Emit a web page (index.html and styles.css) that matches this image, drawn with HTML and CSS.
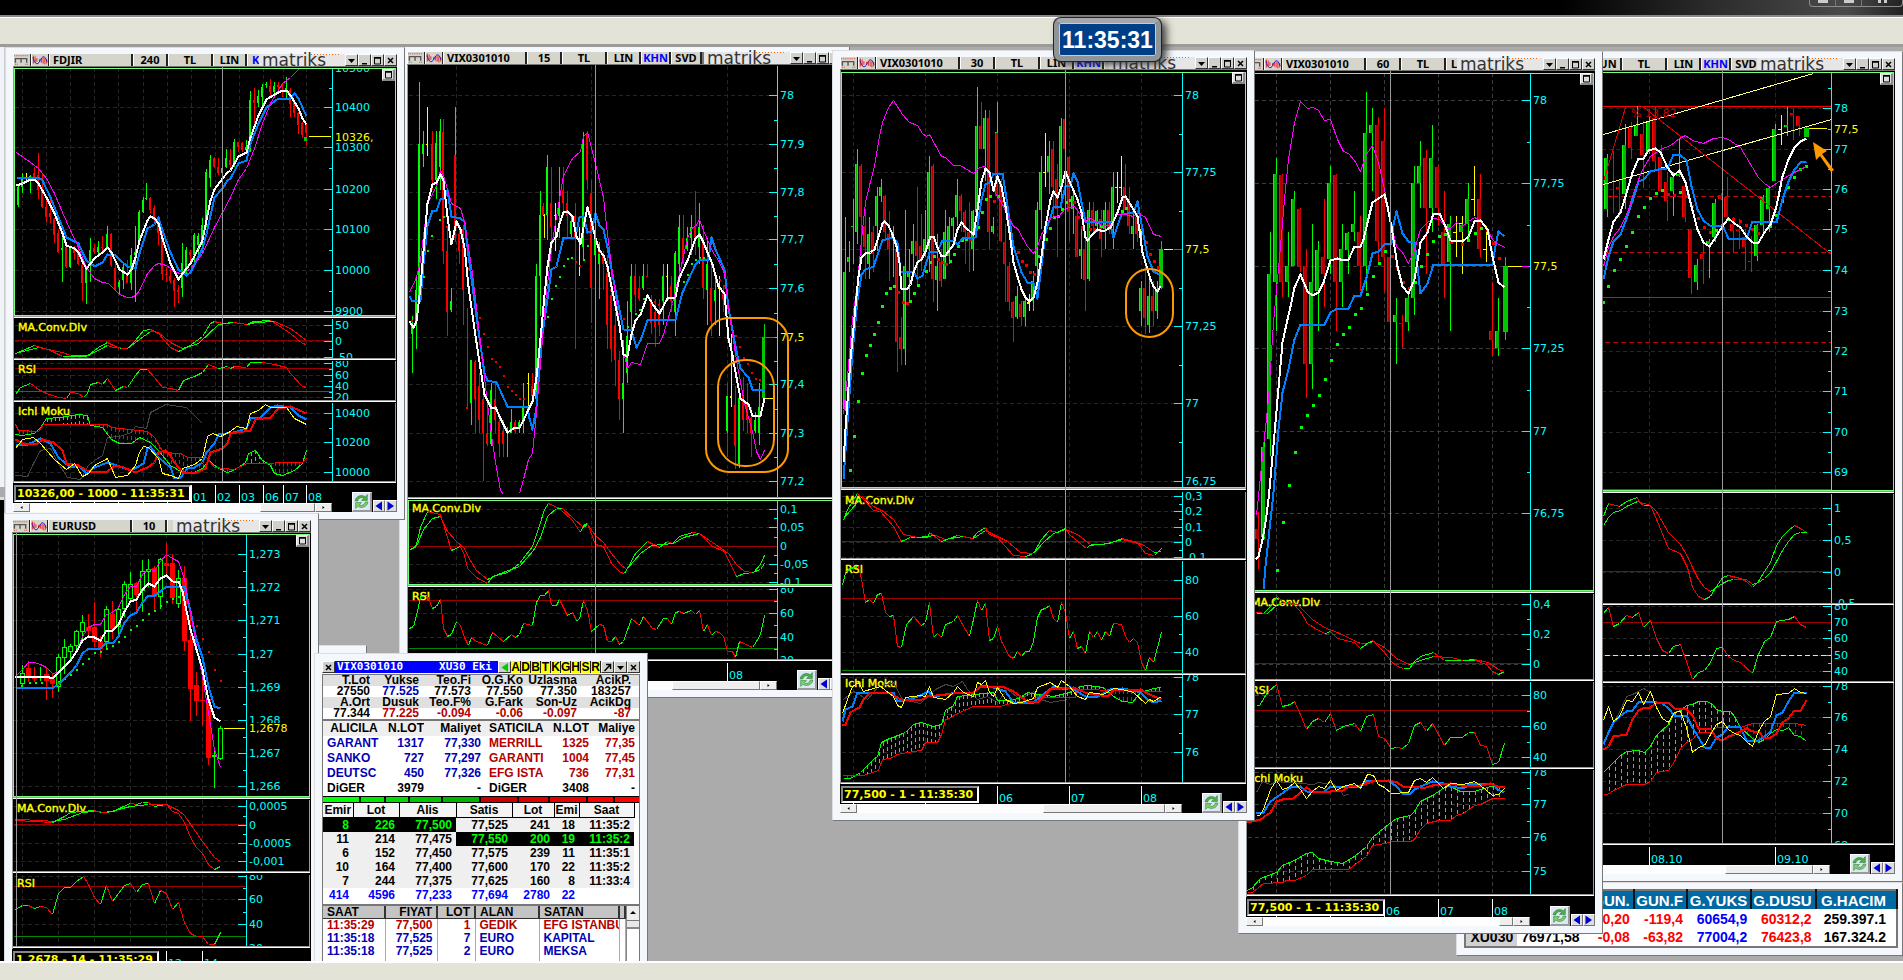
FILE: index.html
```html
<!DOCTYPE html>
<html lang="tr">
<head>
<meta charset="utf-8">
<title>Matriks</title>
<link rel="stylesheet" href="styles.css">
</head>
<body>
<svg class="defs" aria-hidden="true">
  <symbol id="i-m" viewBox="0 0 17 12"><path d="M0 1.5h16M1 10.500h3M12 10.500h4" stroke="#d33" stroke-dasharray="1 1" fill="none"/><path d="M1.500 9V4.500h12V9M7.500 9V4.500" stroke="#555" stroke-width="1.500" fill="none"/></symbol>
  <symbol id="i-wave" viewBox="0 0 18 12"><path d="M1.500 1v9M3.500 2v7M5.500 4v4M8.500 5v3M10.500 4v5M12.500 3v7M14.500 4v7M16.500 5v5" stroke="#f01010"/><path d="M1 3c2 7 5 10 8 4s5-7 8 1" stroke="#1010d0" fill="none"/></symbol>
  <symbol id="i-down" viewBox="0 0 9 9"><path d="M1 3h7L4.500 7z"/></symbol>
  <symbol id="i-min" viewBox="0 0 9 9"><path d="M2 7h5v1.500H2z"/></symbol>
  <symbol id="i-max" viewBox="0 0 9 9"><path d="M1.500 2h6v6h-6z" fill="none" stroke="#000"/><path d="M1 1h7v1.500H1z"/></symbol>
  <symbol id="i-close" viewBox="0 0 9 9"><path d="M2 2l5 5M7 2L2 7" stroke="#000" stroke-width="1.500"/></symbol>
  <symbol id="i-out" viewBox="0 0 9 9"><path d="M1.500 8L7 2M3 1.500h4.500V6" fill="none" stroke="#000" stroke-width="1.500"/></symbol>
  <symbol id="i-left" viewBox="0 0 9 9"><path d="M8 0v9L1.500 4.500z"/></symbol>
  <symbol id="i-right" viewBox="0 0 9 9"><path d="M1.500 0v9L8 4.500z"/></symbol>
  <symbol id="i-sl" viewBox="0 0 9 7"><path d="M5.500 2v3L3.500 3.500z"/></symbol>
  <symbol id="i-sr" viewBox="0 0 9 7"><path d="M3.500 2v3l2-1.500z"/></symbol>
  <symbol id="i-refresh" viewBox="0 0 16 16"><path d="M2 7.500C2.500 3 8 1 11.500 3.500L13.500 1.500V7H8l2-2C7.500 3.500 5 5 4.500 7.500z" fill="#4fb04a" stroke="#1c7a2c" stroke-width=".5"/><path d="M14 8.500c-.5 4.500-6 6.500-9.500 4L2.500 14.500V9H8l-2 2c2.500 1.500 5 0 5.500-2.500z" fill="#7fd06c" stroke="#1c7a2c" stroke-width=".5"/></symbol>
</svg>

<header class="caption"><div class="caption-buttons"><button aria-label="Minimize"><i class="bar"></i></button><button aria-label="Restore"><i class="bar"></i></button><button class="wide" aria-label="Close"><i class="cross"></i></button></div></header>
<div class="toolbar"></div>

<main class="desktop">
  <div class="strip"></div>
  <div class="strip-chart"></div>
  <section class="window back"></section>

  <section class="window w-vix15">
    <div class="title"><div class="cells"><button class="c-ico"><svg><use href="#i-m"/></svg></button><button class="c-ico"><svg><use href="#i-wave"/></svg></button><button class="c-name">VIX0301010</button><button class="c-per">15</button><button class="c-tl">TL</button><button class="c-lin">LIN</button><button class="c-khn">KHN</button><button class="c-svd">SVD</button></div><div class="logo">matriks</div><div class="ctl"><button><svg><use href="#i-down"/></svg></button><button><svg><use href="#i-min"/></svg></button><button><svg><use href="#i-max"/></svg></button><button><svg><use href="#i-close"/></svg></button></div></div>
    <svg class="chart" data-chart="vix15"></svg>
    <div class="foot"><div class="time"><svg class="axis" data-time="vix15"></svg><div class="scroll"><button><svg><use href="#i-sl"/></svg></button><div class="track"><div class="thumb t88"></div></div><button><svg><use href="#i-sr"/></svg></button></div></div><div class="tools"><button class="refresh" aria-label="Refresh"><svg><use href="#i-refresh"/></svg></button><button class="step"><svg><use href="#i-left"/></svg></button><button class="step"><svg><use href="#i-right"/></svg></button></div></div>
  </section>

  <section class="window w-day">
    <div class="title"><div class="cells"><button class="c-ico"><svg><use href="#i-m"/></svg></button><button class="c-ico"><svg><use href="#i-wave"/></svg></button><button class="c-name">VIX0301010</button><button class="c-per">GUN</button><button class="c-tl">TL</button><button class="c-lin">LIN</button><button class="c-khn">KHN</button><button class="c-svd">SVD</button></div><div class="logo">matriks</div><div class="ctl"><button><svg><use href="#i-down"/></svg></button><button><svg><use href="#i-min"/></svg></button><button><svg><use href="#i-max"/></svg></button><button><svg><use href="#i-close"/></svg></button></div></div>
    <svg class="chart" data-chart="day"></svg>
    <button class="pane-max" aria-label="Maximize pane"><svg><use href="#i-max"/></svg></button>
    <div class="foot"><div class="time"><svg class="axis" data-time="day"></svg><div class="scroll"><button><svg><use href="#i-sl"/></svg></button><div class="track"><div class="thumb t88"></div></div><button><svg><use href="#i-sr"/></svg></button></div></div><div class="tools"><button class="refresh" aria-label="Refresh"><svg><use href="#i-refresh"/></svg></button><button class="step"><svg><use href="#i-left"/></svg></button><button class="step"><svg><use href="#i-right"/></svg></button></div></div>
  </section>

  <section class="window w-quotes">
    <table class="quotes">
      <colgroup><col class="q1"><col class="q2"><col class="q3"><col class="q4"><col class="q5"><col class="q5"><col class="q6"></colgroup>
      <thead><tr><th></th><th></th><th>GUN.</th><th>GUN.F</th><th>G.YUKS</th><th>G.DUSU</th><th>G.HACIM</th></tr></thead>
      <tbody><tr><td class="sym"></td><td></td><td class="dn">-0,20</td><td class="dn">-119,4</td><td class="hi">60654,9</td><td class="dn">60312,2</td><td>259.397.1</td></tr>
      <tr><td class="sym">XU030</td><td>76971,58</td><td class="dn">-0,08</td><td class="dn">-63,82</td><td class="hi">77004,2</td><td class="dn">76423,8</td><td>167.324.2</td></tr></tbody>
    </table>
  </section>

  <section class="window w-fdjir">
    <div class="title"><div class="cells"><button class="c-ico"><svg><use href="#i-m"/></svg></button><button class="c-ico"><svg><use href="#i-wave"/></svg></button><button class="c-name">FDJIR</button><button class="c-per">240</button><button class="c-tl">TL</button><button class="c-lin">LIN</button><button class="c-khn">K</button></div><div class="logo">matriks</div><div class="ctl"><button><svg><use href="#i-down"/></svg></button><button><svg><use href="#i-min"/></svg></button><button><svg><use href="#i-max"/></svg></button><button><svg><use href="#i-close"/></svg></button></div></div>
    <svg class="chart" data-chart="fdjir"></svg>
    <button class="pane-max" aria-label="Maximize pane"><svg><use href="#i-max"/></svg></button>
    <div class="foot"><div class="time"><svg class="axis" data-time="fdjir"></svg><output class="last">10326,00 - 1000 - 11:35:31</output><div class="scroll"><button><svg><use href="#i-sl"/></svg></button><div class="track"><div class="thumb t55"></div></div><button><svg><use href="#i-sr"/></svg></button></div></div><div class="tools"><button class="refresh" aria-label="Refresh"><svg><use href="#i-refresh"/></svg></button><button class="step"><svg><use href="#i-left"/></svg></button><button class="step"><svg><use href="#i-right"/></svg></button></div></div>
  </section>

  <section class="window w-vix60">
    <div class="title"><div class="cells"><button class="c-ico"><svg><use href="#i-m"/></svg></button><button class="c-ico"><svg><use href="#i-wave"/></svg></button><button class="c-name">VIX0301010</button><button class="c-per">60</button><button class="c-tl">TL</button><button class="c-lin">L</button></div><div class="logo">matriks</div><div class="ctl"><button><svg><use href="#i-down"/></svg></button><button><svg><use href="#i-min"/></svg></button><button><svg><use href="#i-max"/></svg></button><button><svg><use href="#i-close"/></svg></button></div></div>
    <svg class="chart" data-chart="vix60"></svg>
    <button class="pane-max" aria-label="Maximize pane"><svg><use href="#i-max"/></svg></button>
    <div class="foot"><div class="time"><svg class="axis" data-time="vix60"></svg><output class="last">77,500 - 1 - 11:35:30</output><div class="scroll"><button><svg><use href="#i-sl"/></svg></button><div class="track"><div class="thumb t14"></div></div><button><svg><use href="#i-sr"/></svg></button></div></div><div class="tools"><button class="refresh" aria-label="Refresh"><svg><use href="#i-refresh"/></svg></button><button class="step"><svg><use href="#i-left"/></svg></button><button class="step"><svg><use href="#i-right"/></svg></button></div></div>
  </section>

  <section class="window w-vix30">
    <div class="title"><div class="cells"><button class="c-ico"><svg><use href="#i-m"/></svg></button><button class="c-ico"><svg><use href="#i-wave"/></svg></button><button class="c-name">VIX0301010</button><button class="c-per">30</button><button class="c-tl">TL</button><button class="c-lin">LIN</button><button class="c-khn">KHN</button><button class="c-svd"></button></div><div class="logo">matriks</div><div class="ctl"><button><svg><use href="#i-down"/></svg></button><button><svg><use href="#i-min"/></svg></button><button><svg><use href="#i-max"/></svg></button><button><svg><use href="#i-close"/></svg></button></div></div>
    <svg class="chart" data-chart="vix30"></svg>
    <button class="pane-max" aria-label="Maximize pane"><svg><use href="#i-max"/></svg></button>
    <div class="foot"><div class="time"><svg class="axis" data-time="vix30"></svg><output class="last">77,500 - 1 - 11:35:30</output><div class="scroll"><button><svg><use href="#i-sl"/></svg></button><div class="track"><div class="thumb t122"></div></div><button><svg><use href="#i-sr"/></svg></button></div></div><div class="tools"><button class="refresh" aria-label="Refresh"><svg><use href="#i-refresh"/></svg></button><button class="step"><svg><use href="#i-left"/></svg></button><button class="step"><svg><use href="#i-right"/></svg></button></div></div>
  </section>

  <section class="window w-eurusd">
    <div class="title"><div class="cells"><button class="c-ico"><svg><use href="#i-m"/></svg></button><button class="c-ico"><svg><use href="#i-wave"/></svg></button><button class="c-name">EURUSD</button><button class="c-per">10</button><button class="c-tl"></button></div><div class="logo">matriks</div><div class="ctl"><button><svg><use href="#i-down"/></svg></button><button><svg><use href="#i-min"/></svg></button><button><svg><use href="#i-max"/></svg></button><button><svg><use href="#i-close"/></svg></button></div></div>
    <svg class="chart" data-chart="eurusd"></svg>
    <button class="pane-max" aria-label="Maximize pane"><svg><use href="#i-max"/></svg></button>
    <div class="foot"><div class="time"><svg class="axis" data-time="eurusd"></svg><output class="last">1,2678 - 14 - 11:35:29</output></div><div class="tools"></div></div>
  </section>

  <section class="window w-order">
    <div class="otitle"><button class="sq"><svg><use href="#i-close"/></svg></button><h2><span>VIX0301010</span><span>XU30 Eki</span></h2><button class="sq back-btn"><svg><use href="#i-left"/></svg></button><div class="letters"><button>A</button><button>D</button><button>B</button><button>T</button><button>K</button><button>G</button><button>H</button><button>S</button><button>R</button></div><button class="sq"><svg><use href="#i-out"/></svg></button><button class="sq"><svg><use href="#i-down"/></svg></button><button class="sq"><svg><use href="#i-close"/></svg></button></div>
    <div class="opanel">
      <table class="t-sum">
        <colgroup><col class="s1"><col class="s2"><col class="s3"><col class="s3"><col class="s4"><col class="s4"><col></colgroup>
        <tbody><tr class="h"><th>T.Lot</th><th>Yukse</th><th>Teo.Fi</th><th>O.G.Ko</th><th>Uzlasma</th><th>AcikP.</th><th></th></tr>
        <tr><td>27550</td><td class="nv">77.525</td><td>77.573</td><td>77.550</td><td>77.350</td><td>183257</td><td></td></tr>
        <tr class="h"><th>A.Ort</th><th>Dusuk</th><th>Teo.F%</th><th>G.Fark</th><th>Son-Uz</th><th>AcikDg</th><th></th></tr>
        <tr class="rd"><td class="bk">77.344</td><td>77.225</td><td>-0.094</td><td>-0.06</td><td>-0.097</td><td>-87</td><td></td></tr></tbody>
      </table>
      <table class="t-brk">
        <colgroup><col class="b1"><col class="b2"><col class="b3"><col class="b4"><col class="b5"><col class="b6"><col></colgroup>
        <thead><tr><th class="l">&nbsp;ALICILA</th><th>N.LOT</th><th>Maliyet</th><th class="l sell">SATICILA</th><th>N.LOT</th><th>Maliye</th><th></th></tr></thead>
        <tbody><tr><td class="l nv">GARANT</td><td class="nv">1317</td><td class="nv">77,330</td><td class="l sell rdc">MERRILL</td><td class="rdc">1325</td><td class="rdc">77,35</td><td></td></tr>
        <tr><td class="l nv">SANKO</td><td class="nv">727</td><td class="nv">77,297</td><td class="l sell rdc">GARANTI</td><td class="rdc">1004</td><td class="rdc">77,45</td><td></td></tr>
        <tr><td class="l nv">DEUTSC</td><td class="nv">450</td><td class="nv">77,326</td><td class="l sell rdc">EFG ISTA</td><td class="rdc">736</td><td class="rdc">77,31</td><td></td></tr>
        <tr><td class="l">DiGER</td><td>3979</td><td>-</td><td class="l sell">DiGER</td><td>3408</td><td>-</td><td></td></tr></tbody>
      </table>
      <div class="depth"><i class="d1"></i><i class="d2"></i><i class="d3"></i><i class="d4"></i><i class="d5"></i><i class="d6"></i><i class="d7"></i><i class="d8"></i><i class="d9"></i><i class="d10"></i></div>
      <table class="t-book">
        <colgroup><col class="k1"><col class="k2"><col class="k3"><col class="k4"><col class="k5"><col class="k6"><col class="k7"><col></colgroup>
        <thead><tr><th>Emir</th><th>Lot</th><th>Alis</th><th>Satis</th><th>Lot</th><th>Emi</th><th>Saat</th><th></th></tr></thead>
        <tbody><tr><td class="on">8</td><td class="on">226</td><td class="on">77,500</td><td>77,525</td><td>241</td><td>18</td><td>11:35:2</td><td></td></tr>
        <tr><td>11</td><td>214</td><td>77,475</td><td class="on">77,550</td><td class="on">200</td><td class="on">19</td><td class="on">11:35:2</td><td></td></tr>
        <tr><td>6</td><td>152</td><td>77,450</td><td>77,575</td><td>239</td><td>11</td><td>11:35:1</td><td></td></tr>
        <tr><td>10</td><td>164</td><td>77,400</td><td>77,600</td><td>170</td><td>22</td><td>11:35:2</td><td></td></tr>
        <tr><td>7</td><td>244</td><td>77,375</td><td>77,625</td><td>160</td><td>8</td><td>11:33:4</td><td></td></tr>
        <tr class="sum"><td>414</td><td>4596</td><td>77,233</td><td>77,694</td><td>2780</td><td>22</td><td></td><td></td></tr></tbody>
      </table>
      <div class="trades">
        <table class="t-trd">
          <colgroup><col class="r1"><col class="r2"><col class="r3"><col class="r4"><col class="r5"><col></colgroup>
          <thead><tr><th class="l">SAAT</th><th>FIYAT</th><th>LOT</th><th class="l">ALAN</th><th class="l">SATAN</th><th></th></tr></thead>
          <tbody><tr class="rd"><td class="l">11:35:29</td><td>77,500</td><td>1</td><td class="l">GEDIK</td><td class="l">EFG ISTANBUL</td><td></td></tr>
          <tr class="nvr"><td class="l">11:35:18</td><td>77,525</td><td>7</td><td class="l">EURO</td><td class="l">KAPITAL</td><td></td></tr>
          <tr class="nvr"><td class="l">11:35:18</td><td>77,525</td><td>2</td><td class="l">EURO</td><td class="l">MEKSA</td><td></td></tr>
          <tr><td>&nbsp;</td><td></td><td></td><td></td><td></td><td></td></tr></tbody>
        </table>
        <div class="vscroll"><button aria-label="Up"><i></i></button><div class="vthumb"></div></div>
      </div>
    </div>
  </section>
</main>
<footer class="status"></footer>
<time class="clock">11:35:31</time>
<script src="charts.js"></script>
</body>
</html>
```

FILE: styles.css
```css
* { box-sizing: border-box; }
body { margin: 0; height: 100vh; display: flex; flex-direction: column; overflow: hidden; position: relative; background: #ababab; font-family: "Liberation Sans", Arial, sans-serif; }
button { font: inherit; margin: 0; padding: 0; border: 0; color: inherit; background: none; }
.defs { position: absolute; width: 0; height: 0; }

.caption { flex: none; height: 17px; background: linear-gradient(90deg, #000 0 82%, #2c2c2c 90%, #4a4a4a 97%, #222); border-bottom: 2px solid #8a8688; display: flex; justify-content: flex-end; align-items: flex-start; }
.caption-buttons { display: flex; height: 7px; border: 1px solid #8c8c8c; border-top: 0; border-radius: 0 0 4px 4px; overflow: hidden; }
.caption-buttons button { width: 26px; height: 6px; border-right: 1px solid #777; }
.caption-buttons .wide { width: 40px; border-right: 0; }
.bar { display: block; width: 10px; height: 3px; margin: 0 auto 3px; background: #ccc; }
.cross { display: block; width: 9px; height: 3px; margin: 0 auto 3px; border: 3px solid #ccc; border-width: 0 3px; }
.toolbar { flex: none; height: 27px; background: #e3e3d7; border-top: 1px solid #fff; }
.status { flex: none; height: 19px; background: #e3e3d7; border-top: 2px solid #fff; }
.desktop { flex: 1; min-height: 0; position: relative; overflow: hidden; background: #ababab; border-top: 3px solid #9b9b97; }

.window { position: absolute; padding: 6px 7px 7px; background: #f4f7fc; border: 1px solid #ddd; border-right: 1px solid #777; border-bottom: 1px solid #777; display: flex; flex-direction: column; }
.strip { position: absolute; left: 0; top: 0; width: 5px; height: 440px; background: #f0f3f8; border-right: 1px solid #ccc; }
.strip-chart { position: absolute; left: 0; top: 450px; width: 4px; bottom: 0; background: #000; border-top: 3px solid #ddd; }
.back { left: 310px; top: 598px; width: 57px; height: 60px; z-index: 1; }
.w-vix15 { left: 399px; top: -2px; width: 451px; z-index: 1; }
.w-day { left: 1459px; top: 4px; width: 444px; z-index: 2; }
.w-quotes { left: 1456px; top: 835px; width: 447px; z-index: 1; }
.w-fdjir { left: 5px; top: 0; width: 400px; z-index: 2; }
.w-vix60 { left: 1238px; top: 4px; width: 365px; z-index: 3; }
.w-vix30 { left: 832px; top: 3px; width: 423px; z-index: 4; }
.w-eurusd { left: 4px; top: 466px; width: 315px; z-index: 3; }
.w-order { left: 314px; top: 606px; width: 334px; z-index: 4; padding-top: 7px; }

.title { display: flex; height: 13px; background: #777; font: 700 11px/12px "Noto Sans", "Open Sans", sans-serif; color: #000; }
.cells { flex: 1; min-width: 0; display: flex; overflow: hidden; }
.cells button { flex: none; height: 12px; background: #d5d5cb; border-left: 1px solid #fff; border-right: 2px solid #222; overflow: hidden; text-align: center; }
.cells button svg { display: block; width: 100%; height: 12px; }
.cells .c-ico { width: 18px; border-right-width: 1px; }
.cells .c-name { width: 84px; text-align: left; padding-left: 3px; }
.c-per { width: 35px; }
.c-tl { width: 45px; }
.c-lin { width: 34px; }
.cells .c-khn { width: 30px; color: #00f; }
.c-svd { width: 31px; }
.w-fdjir .c-khn, .w-vix60 .c-lin { text-align: left; padding-left: 4px; }
.logo { flex: none; width: 86px; height: 12px; padding-left: 3px; font: 400 17px/12px "DejaVu Sans", sans-serif; color: #333; background: repeating-linear-gradient(90deg, #f60 0 1px, #eee 1px 3px) 52px 0 / 30px 1px no-repeat, #e6e6e6; }
.ctl { flex: none; display: flex; }
.ctl button, .sq { width: 13px; height: 12px; background: #d0d0cc; border: 1px solid #fff; border-right-color: #333; border-bottom-color: #333; }
.ctl svg, .sq svg { display: block; width: 9px; height: 9px; margin: 0 auto; }
.chart { display: block; width: 100%; height: auto; background: #000; }
.chart text, .axis text { font-family: "DejaVu Sans", Verdana, sans-serif; font-size: 11px; }
.pane-max { position: absolute; right: 9px; top: 21px; width: 13px; height: 12px; background: #ddd; border: 1px solid #fff; border-right: 2px solid #888; border-bottom: 2px solid #888; }
.pane-max svg { display: block; width: 9px; height: 9px; margin: 0 auto; }

.foot { display: flex; height: 29px; background: #000; }
.time { flex: 1; min-width: 0; position: relative; display: flex; flex-direction: column; }
.axis { flex: none; display: block; width: 100%; height: 20px; }
.last { position: absolute; left: 1px; top: 2px; padding: 0 4px 0 1px; height: 17px; border: 2px solid #fff; border-top-color: #888; border-left-color: #888; background: #000; color: #ff0; font: 700 11px/14px "DejaVu Sans", Verdana, sans-serif; white-space: nowrap; }
.scroll { display: flex; height: 9px; background: #fdfdfd; }
.scroll button { width: 17px; background: #eee; border: 1px solid #fff; border-right-color: #777; border-bottom-color: #777; }
.scroll svg { display: block; width: 9px; height: 7px; margin: 0 auto; }
.track { flex: 1; display: flex; justify-content: flex-end; }
.thumb { background: #eee; border: 1px solid #fff; border-right-color: #777; border-bottom-color: #777; }
.t14 { width: 14px; }
.t55 { width: 55px; }
.t88 { width: 88px; }
.t122 { width: 122px; }
.tools { flex: none; width: 65px; display: flex; align-items: flex-end; justify-content: flex-end; }
.refresh { width: 20px; height: 20px; margin-right: 1px; background: #dde6f4; border: 1px solid #fff; border-right: 2px solid #999; border-bottom: 2px solid #999; }
.refresh svg { display: block; width: 17px; height: 17px; }
.step { width: 12px; height: 12px; background: #ddd; border: 1px solid #fff; border-right-color: #777; border-bottom-color: #777; fill: #0000d0; }
.step svg { display: block; width: 9px; height: 10px; }

.clock { position: absolute; z-index: 10; left: 1054px; top: 18px; width: 107px; height: 43px; border: 5px solid #8f9496; border-top-color: #a5a8aa; border-radius: 7px; background: #003f87; color: #fff; font-size: 23px; font-weight: 700; line-height: 34px; text-align: center; box-shadow: inset 0 0 0 1px #ccc, 0 0 0 1px #222, 5px 3px 8px #333; }

.quotes { table-layout: fixed; width: 434px; border-collapse: collapse; border: 2px solid #777; background: #fff; font-size: 14px; font-weight: 700; color: #000; }
.q1 { width: 52px; } .q2 { width: 66px; } .q3 { width: 50px; } .q4 { width: 53px; } .q5 { width: 64px; } .q6 { width: 81px; }
.quotes th { height: 19px; padding: 0 3px 0 0; background: #0068a2; color: #fff; font-size: 15px; line-height: 17px; text-align: right; border-right: 2px solid #111; }
.quotes td { height: 19px; padding: 0 4px 0 0; line-height: 18px; text-align: right; }
.quotes th:last-child, .quotes td:last-child { padding-right: 10px; }
.quotes td.sym { background: #d0d0d0; }
.quotes .dn { color: #f00; }
.quotes .hi { color: #00f; }

.otitle { display: flex; height: 12px; margin-bottom: 1px; }
.otitle .sq { flex: none; }
.otitle h2 { flex: 1; margin: 0; padding: 0 6px 0 2px; display: flex; justify-content: space-between; background: #00f; color: #fff; font: 700 11px/11px "DejaVu Sans Mono", monospace; }
.back-btn { fill: #0c0; }
.letters { display: flex; }
.letters button { width: 10px; height: 12px; background: #ff0; border-right: 1px solid #222; font-size: 12px; font-weight: 700; line-height: 12px; }
.opanel { border: 1px solid #777; background: #fff; height: 290px; overflow: hidden; color: #000; }
.opanel table { table-layout: fixed; width: 100%; border-collapse: collapse; font-size: 13px; }
.opanel th, .opanel td { padding: 0 4px 0 0; font-weight: 700; text-align: right; white-space: nowrap; overflow: hidden; }
.opanel .l { text-align: left; padding: 0 0 0 4px; }
.opanel .l.sell { padding-left: 8px; }
.opanel .t-sum th, .opanel .t-sum td { padding-right: 0; height: 11px; line-height: 11px; font-size: 12px; }
.h { background: #e0e0e0; }
.s1 { width: 47px; } .s2 { width: 49px; } .s3 { width: 52px; } .s4 { width: 54px; }
.nv, .nvr { color: #0000b4; }
.rd, .rdc { color: #b40000; }
.bk { color: #000; }
.t-brk { border-top: 2px solid #777; }
.opanel .t-brk th, .opanel .t-brk td { height: 15px; line-height: 15px; font-size: 12px; padding-right: 0; }
.t-brk thead { background: #eee; }
.b1 { width: 60px; } .b2 { width: 41px; } .b3 { width: 57px; } .b4 { width: 70px; } .b5 { width: 38px; } .b6 { width: 46px; }
.depth { display: flex; gap: 2px; height: 7px; padding: 1px 0; background: #000; }
.depth i { flex: 100; }
.depth .d1 { background: #0f0; } .depth .d2 { background: #00e600; flex: 66; } .depth .d3 { background: #00dc00; flex: 60; } .depth .d4 { background: #00c800; flex: 88; } .depth .d5 { background: #00b400; }
.depth .d6 { background: #c80000; } .depth .d7 { background: #dc0000; flex: 82; } .depth .d8 { background: #e60000; } .depth .d9 { background: #f00; flex: 70; } .depth .d10 { background: #f00; flex: 66; }
.k1 { width: 30px; } .k2 { width: 46px; } .k3 { width: 57px; } .k4 { width: 56px; } .k5 { width: 42px; } .k6 { width: 25px; } .k7 { width: 55px; }
.opanel .t-book th { height: 14px; line-height: 12px; font-size: 12px; padding: 0; text-align: center; background: #f4f4f4; border-right: 1px solid #000; border-bottom: 1px solid #000; }
.opanel .t-book td { height: 14px; line-height: 14px; font-size: 12px; background: #efefef; }
.opanel .t-book td:last-child, .opanel .t-book th:last-child { background: #fff; border: 0; }
.opanel .t-book td.on { background: #000; color: #0f0; }
.opanel .t-book .sum td { background: #fff; color: #00f; }
.trades { display: flex; margin-top: 2px; border-top: 2px solid #777; }
.r1 { width: 62px; } .r2 { width: 52px; } .r3 { width: 38px; } .r4 { width: 64px; } .r5 { width: 80px; }
.opanel .t-trd th { height: 13px; line-height: 12px; font-size: 12px; background: #c4c4c4; border-right: 2px solid #333; border-bottom: 1px solid #333; }
.opanel .t-trd td { height: 13px; line-height: 13px; font-size: 12px; border-right: 1px solid #aaa; }
.vscroll { flex: none; width: 13px; background: #fff; border-left: 1px solid #888; }
.vscroll button { display: block; width: 12px; height: 15px; background: #eee; border-bottom: 1px solid #777; }
.vscroll i { display: block; width: 0; height: 0; margin: auto; border: 3px solid transparent; border-top: 0; border-bottom-color: #000; }
.vthumb { height: 8px; background: #e8e8e8; border-bottom: 2px solid #888; }
```

FILE: charts.js
```js
// Chart data is digitised on a 3x grid; `o` is [left, top, xScale, yScale] of that grid.
const C = {
fdjir: { view:[13,67,384,416], o:[0,0,3,3], axis:997, cross:667, right:395,
  grid:[67,139,211,283,355,428,500,572,644,716,788,848,919], times:{572:'01',644:'02',716:'03',788:'06',848:'07',919:'08'},
  panes:[
  { y:[68,316], sel:1, labels:'10500:203 10400:320 !10326,:410 10300:442 10200:566 10100:688 10000:811 9900:932', mark:[927,993,409],
    w:2, candles:`54 555 620 560 615 g|66 520 580 530 560 g|78 520 545 530 533 y|90 525 578 528 540 g|102 500 540 520 535 r|115 460 598 525 570 r|127 520 625 560 620 r|139 590 665 620 652 r|151 600 670 640 650 r|163 655 730 658 705 r|175 690 760 700 755 r|187 700 845 745 750 g|199 738 803 740 800 r|211 738 803 740 800 g|223 738 780 745 760 r|235 735 795 750 793 r|247 790 903 795 850 r|259 805 913 808 848 g|271 715 845 750 790 g|283 733 762 745 755 r|295 722 768 740 755 g|307 708 755 740 745 r|320 678 745 703 740 g|332 700 800 703 795 r|344 785 872 805 868 r|356 840 882 845 860 g|368 785 868 800 840 g|380 780 850 820 850 r|392 745 870 765 850 g|404 678 905 755 765 g|416 630 725 635 725 g|428 592 640 600 635 g|439 549 600 594 597 g|451 590 640 595 630 r|463 615 670 625 660 r|475 650 735 660 700 r|487 690 840 700 823 r|499 800 845 822 826 r|511 808 850 828 843 r|523 835 920 840 872 r|535 855 910 870 875 r|547 728 890 790 865 g|559 740 825 750 820 g|571 750 795 755 765 r|583 700 790 705 765 g|595 700 780 708 735 g|607 655 760 675 735 g|619 508 680 515 670 g|631 465 560 480 535 g|643 470 505 475 500 r|655 475 525 500 520 r|667 500 520 505 518 g|679 447 505 475 500 g|691 447 510 480 495 r|703 418 500 425 495 g|715 425 455 427 440 r|727 425 455 430 450 r|739 420 455 440 450 g|751 273 455 300 450 g|763 265 380 300 310 r|775 270 320 288 310 g|787 253 320 262 290 g|799 245 265 253 256 g|811 237 290 258 275 r|823 245 283 258 275 g|835 245 270 255 262 r|847 250 290 258 262 r|859 232 295 265 270 g|871 265 350 270 312 r|883 300 350 305 340 r|895 335 402 340 375 r|907 365 414 370 405 r|919 370 435 372 400 r|919 410 422 410 422 G`,
    blue:'48,530 115,530 127,540 151,590 175,650 199,712 235,730 247,755 259,780 283,797 307,785 320,763 344,765 356,778 380,798 404,805 416,760 440,685 463,672 475,652 487,690 511,755 535,808 559,825 571,815 607,745 619,700 643,590 667,565 680,540 691,535 715,490 739,480 751,430 775,370 799,320 835,295 871,293 883,280 895,295 919,347',
    mag:['48,457 70,470 90,485 115,505 139,535 163,580 187,635 211,690 235,740 259,800 283,833 307,847 325,849 356,882 380,892 392,892 404,885 416,870 440,820 463,795 475,788 499,795 523,812 547,822 571,805 607,760 643,680 691,590 715,537 739,503 763,445 787,370 811,310 847,250 870,230 895,208'],
    white:'48,555 66,550 90,538 102,536 115,548 139,590 163,640 187,700 199,735 223,745 235,755 250,790 259,805 283,775 307,755 320,741 332,755 356,808 380,822 392,808 404,770 416,720 440,660 451,648 463,653 475,668 487,715 511,790 535,837 547,820 571,790 595,745 607,720 619,660 631,600 643,568 667,535 680,515 691,510 715,468 739,457 751,410 775,345 799,297 823,282 847,269 859,270 871,285 895,325 907,355 919,371' },
  { y:[319,358], name:'MA.Conv.Div', labels:'50:974 0:1023 -50:1070', h:[['#800',1021]],
    trend:['45,1060 102,1035 150,1050 187,1067 259,1067 295,1040 320,1027 356,1043 380,1043 404,1020 428,990 451,988 475,1000 511,1040 535,1053 560,1040 607,1008 631,970 643,963 667,968 700,967 740,973 760,963 810,961 835,975 871,1000 907,1028 919,1032','45,1058 115,1042 187,1055 211,1066 265,1065 320,1035 340,1040 380,1043 416,1018 451,993 475,995 511,1025 547,1045 595,1028 655,972 700,967 740,973 765,965 823,963 871,985 919,1020'] },
  { y:[361,400], name:'RSI', labels:'80:1089 60:1124 40:1158 20:1192', h:[['#900',1105],['#080',1174]],
    trend:['45,1183 60,1160 90,1150 115,1168 139,1180 175,1192 199,1194 211,1175 235,1178 250,1192 260,1180 271,1153 295,1145 307,1152 320,1135 344,1170 368,1157 380,1160 404,1125 420,1108 440,1108 463,1130 487,1160 511,1165 535,1170 550,1140 583,1128 607,1115 625,1092 655,1103 680,1098 691,1105 703,1098 739,1102 751,1087 787,1087 823,1092 859,1100 871,1120 907,1158 919,1160'] },
  { y:[403,481], name:'Ichi Moku', labels:'10400:1238 10200:1327 10000:1415', step:12,
    gray:'45,1425 80,1427 100,1390 120,1350 150,1345 175,1390 200,1430 240,1437 265,1395 283,1380 307,1365 320,1310 356,1308 392,1295 404,1278 438,1283 451,1235 475,1225 495,1213 559,1220 583,1245 607,1270',
    spanA:'45,1302 66,1306 102,1300 120,1282 139,1255 180,1250 235,1243 260,1245 271,1275 307,1280 332,1318 356,1330 392,1328 416,1312 451,1325 475,1350 511,1395 547,1415 583,1415 607,1405 625,1380 655,1405 680,1415 700,1410 735,1385 745,1358 766,1350 787,1380 811,1395 823,1420 845,1425 883,1410 907,1390 919,1350',
    spanB:'45,1272 55,1290 115,1292 130,1273 320,1272 332,1282 440,1292 463,1310 490,1357 540,1360 560,1370 619,1370 643,1400 700,1408 740,1388 905,1387 919,1375',
    blue:'45,1332 80,1332 120,1315 151,1330 175,1370 210,1400 235,1395 259,1418 283,1400 320,1385 356,1397 392,1410 428,1390 440,1345 451,1338 475,1370 511,1400 523,1435 540,1432 560,1405 583,1400 607,1385 619,1355 643,1328 655,1302 700,1295 739,1283 751,1255 780,1252 811,1220 830,1216 871,1222 895,1245 919,1257',
    red:'45,1318 66,1328 110,1330 125,1316 160,1327 187,1350 199,1388 235,1395 265,1413 320,1413 344,1395 370,1400 404,1415 440,1400 463,1385 475,1355 495,1350 511,1365 523,1385 545,1415 583,1418 615,1405 631,1355 667,1345 680,1330 691,1298 751,1290 766,1258 811,1250 835,1225 871,1218 919,1240',
    yellow:'45,1345 66,1318 100,1312 120,1330 139,1350 165,1380 199,1408 223,1390 247,1428 265,1420 283,1395 320,1375 344,1430 380,1425 404,1395 416,1355 430,1338 445,1340 475,1375 487,1418 511,1425 535,1435 547,1405 583,1393 607,1375 620,1308 635,1298 660,1307 690,1293 707,1278 739,1283 751,1238 775,1230 795,1213 811,1220 859,1220 883,1255 919,1272' }]},

vix15: { view:[407,65,435,596], o:[390,30,3,2.306], axis:1160, cross:616, right:842, grid:[197,604,1012], times:{1012:'08'}, dot:2,
  panes:[
  { y:[66,497], labels:'78:150 77,9:262 77,8:373 77,7:483 77,6:596 !77,5:707 77,4:817 77,3:930 77,2:1041', mark:[1126,1155,848], mark2:[1126,1155,707],
    w:2, candles:`65 660 790 680 700 g|77 565 735 600 680 g|88 120 625 262 620 g|100 232 315 262 285 g|112 178 290 262 264 y|125 232 370 262 345 r|137 232 390 260 345 g|149 205 370 232 315 g|160 205 540 235 510 r|172 455 705 510 650 r|184 596 650 625 645 g|196 178 480 400 402 g|196 288 490 288 480 r|208 460 540 470 510 r|220 450 680 460 600 r|232 640 875 870 875 r|244 760 910 762 860 g|256 760 930 765 850 r|268 790 930 820 900 r|280 840 1040 850 930 r|292 850 960 930 955 r|304 815 960 830 955 g|316 815 930 850 900 r|328 890 985 905 955 r|340 900 985 925 955 r|352 915 985 920 930 g|364 875 930 905 930 g|376 900 930 905 925 r|388 900 930 905 920 g|400 815 930 870 900 g|413 790 870 815 817 y|425 790 860 820 845 r|437 540 860 567 850 g|449 372 660 427 567 g|461 425 480 427 430 y|460 400 427 405 427 r|472 288 485 315 427 g|484 315 520 400 455 r|496 400 510 427 430 y|508 315 480 400 430 g|520 315 430 370 400 r|532 372 480 400 430 r|544 430 480 440 470 g|556 400 735 430 480 r|568 455 567 480 483 y|580 235 530 262 500 g|592 232 370 240 345 r|604 345 675 375 595 r|616 460 567 470 520 g|628 490 620 510 540 g|640 510 600 515 540 r|652 520 735 560 680 r|664 565 765 610 735 r|676 650 820 680 760 r|688 740 900 760 850 r|700 715 930 815 850 g|712 625 815 705 790 g|724 540 700 567 650 g|736 540 650 567 610 r|748 567 625 595 620 r|760 540 600 567 595 g|772 540 570 567 570 r|784 610 700 620 675 r|796 620 730 650 685 r|808 620 705 650 680 r|820 540 680 567 625 g|832 540 615 567 570 y|844 567 650 590 625 r|856 510 705 515 650 g|868 427 567 455 540 g|880 427 540 480 540 r|892 455 510 480 505 g|904 427 520 455 480 g|916 372 520 455 478 r|928 400 540 455 500 g|940 450 620 478 595 r|952 480 680 540 600 g|964 540 705 595 670 r|976 560 680 600 625 g|988 567 705 595 597 y|1000 590 650 600 620 r|1012 815 985 845 925 r|1011 845 930 845 925 g|1024 700 870 845 848 y|1036 820 1012 865 960 r|1048 845 1010 848 1000 g|1060 800 925 840 900 r|1072 815 930 860 900 r|1084 870 985 895 930 r|1096 880 930 900 925 g|1108 815 957 870 930 g|1121 678 860 707 848 G`,
    gdots:'77,670 90,625 102,570 114,510 126,474 150,437 162,432 437,770 449,768 474,662 486,620 497,590 509,570 521,545 533,528 545,525 581,530 593,497 714,685 738,655 750,645 762,620 833,620 857,612 881,580 893,565 905,540 917,530 930,525 941,525',
    rdots:'65,671 172,455 197,455 234,550 246,577 258,632 270,665 282,702 294,730 306,758 318,766 330,778 342,798 354,824 366,832 378,842 390,850 402,852 425,838 557,535 570,545 628,515 652,550 664,600 688,640 702,667 784,626 796,628 808,635 953,525 975,560 990,577 1001,590 1013,632 1037,705 1050,730 1062,757 1074,770 1086,792 1098,804 1110,808',
    blue:'58,613 66,624 90,622 100,540 112,450 125,415 137,415 149,390 163,388 170,370 184,430 210,433 222,440 234,520 258,660 282,790 292,808 317,812 352,866 410,867 418,895 425,920 437,870 449,730 472,620 484,550 497,545 520,478 556,478 568,432 580,430 592,466 604,463 616,422 628,450 640,460 652,500 676,600 700,690 724,692 738,730 750,715 772,668 855,667 877,605 915,540 930,527 953,527 963,478 975,505 1001,552 1013,640 1037,740 1049,780 1073,800 1087,827 1121,828',
    mag:['58,605 78,570 90,530 112,400 137,360 149,322 160,335 184,400 210,410 222,440 246,560 270,720 292,860 305,950 318,1010 330,1060 338,1070','388,1068 400,1035 413,990 425,975 437,880 449,770 461,650 484,500 508,390 520,335 545,295 569,280 580,245 592,235 604,270 628,345 640,385 652,470 676,610 700,740 712,780 724,766 750,770 772,722 808,722 820,700 845,630 867,560 890,480 905,455 915,452 928,435 940,462 965,510 985,530 1001,560 1013,640 1037,760 1061,860 1085,925 1097,970 1109,990 1121,968'],
    white:'58,670 68,685 78,672 90,590 112,400 125,355 137,350 149,332 160,345 172,430 184,493 197,440 210,460 222,500 234,590 258,720 282,840 303,872 315,870 330,895 352,927 370,918 388,916 400,900 413,875 425,855 437,800 449,710 461,610 472,545 484,490 497,475 508,445 520,420 532,418 545,430 557,475 569,492 580,455 592,408 604,440 616,480 628,508 640,520 652,545 664,590 688,680 700,748 710,752 724,700 736,668 750,655 772,610 790,635 808,653 832,618 855,616 867,570 890,530 915,480 928,470 940,488 965,540 985,590 1001,607 1013,710 1025,750 1037,800 1049,848 1073,862 1087,888 1109,887 1121,848',
    rings:[[948,664,1194,1019,23],[985,760,1152,1006,27]] },
  { y:[500,585], sel:1, name:'MA.Conv.Div', labels:'0,1:1105 0,05:1147 0:1190 -0,05:1232 -0,1:1274', h:[['#900',1189]],
    trend:['60,1200 78,1185 90,1145 112,1110 150,1117 160,1140 184,1198 210,1190 222,1210 232,1240 258,1262 292,1276 306,1260 352,1250 388,1228 425,1190 449,1135 461,1105 475,1090 508,1102 545,1130 569,1158 580,1142 592,1138 616,1185 640,1190 664,1228 690,1250 702,1252 712,1240 736,1205 772,1178 808,1192 832,1178 845,1182 867,1167 905,1157 928,1160 965,1190 1001,1202 1037,1258 1061,1252 1090,1250 1109,1232 1121,1210','60,1197 78,1190 100,1150 125,1125 150,1120 172,1155 197,1178 222,1195 234,1215 258,1245 292,1266 330,1252 388,1235 430,1200 449,1170 472,1120 497,1103 515,1103 580,1145 592,1140 616,1165 640,1180 664,1205 690,1232 708,1242 750,1205 784,1188 850,1183 880,1170 928,1160 965,1180 1013,1205 1037,1232 1061,1248 1087,1250 1109,1243 1121,1230'] },
  { y:[588,659], name:'RSI', labels:'80:1290 60:1344 40:1400 20:1453', h:[['#900',1315],['#080',1426]],
    trend:['58,1380 68,1375 80,1340 90,1305 112,1303 125,1332 137,1328 149,1313 160,1378 172,1397 184,1393 197,1363 210,1372 222,1400 234,1418 244,1400 258,1410 292,1418 305,1388 340,1410 364,1393 376,1400 388,1393 400,1368 425,1372 437,1318 449,1303 461,1302 473,1292 484,1325 497,1325 508,1313 532,1350 545,1342 557,1360 568,1358 580,1315 592,1338 604,1387 628,1370 640,1372 652,1408 664,1410 676,1397 688,1417 700,1410 724,1357 748,1372 760,1352 785,1380 797,1382 820,1357 832,1357 844,1370 856,1343 868,1340 880,1345 904,1337 916,1347 928,1338 940,1385 952,1370 964,1395 976,1387 988,1388 1000,1397 1012,1432 1025,1433 1036,1445 1048,1410 1085,1423 1097,1410 1109,1392 1121,1350'] }]},

vix30: { view:[840,71,407,714], o:[820,0,3,3], axis:1087, cross:736, right:1245, grid:[100,316,532,748,964], times:{532:'06',748:'07',964:'08'},
  panes:[
  { y:[73,489], sel:1, labels:'78:289 77,75:520 !77,5:751 77,25:982 77:1213 76,75:1446', mark:[1031,1060,751], mark2:[1062,1085,751],
    w:3, candles:`75 655 1235 820 1230 g|88 725 820 775 790 g|100 600 795 680 685 g|112 450 735 495 700 g|124 495 770 500 655 r|136 630 840 680 745 r|148 655 840 705 795 g|160 680 820 700 765 r|172 565 755 590 680 g|184 540 610 565 590 g|195 588 720 590 700 r|208 635 845 705 750 r|220 680 835 705 720 g|232 730 1118 750 1030 r|244 955 1098 1015 1050 r|256 632 1097 800 1050 g|268 750 905 820 835 g|280 675 835 725 765 g|292 565 865 725 770 r|304 645 815 740 790 r|316 632 775 720 760 g|328 470 820 520 750 g|340 495 910 500 840 r|352 705 935 800 842 g|364 750 865 790 845 r|376 632 840 700 840 g|388 655 795 680 770 g|400 655 745 658 680 g|412 540 680 588 655 g|424 585 700 590 635 r|436 632 795 640 700 r|448 610 820 700 720 r|460 632 815 635 750 g|472 265 690 380 640 g|484 310 450 380 450 r|496 333 545 358 450 g|508 333 750 358 700 r|520 655 705 680 700 g|532 310 403 400 402 g|532 403 600 403 590 r|544 540 730 545 725 r|556 675 908 730 795 r|568 790 935 800 910 r|580 905 1028 910 958 r|592 862 960 890 955 g|604 905 980 915 955 r|616 890 980 905 955 g|628 885 935 910 914 y|640 815 935 845 905 g|652 610 870 632 800 g|664 470 690 520 632 g|676 402 565 518 522 y|688 427 585 470 520 g|700 427 650 450 565 r|712 495 773 540 630 r|724 358 635 380 565 g|736 355 460 360 450 r|748 470 725 475 640 r|760 580 705 590 630 g|772 630 775 650 773 r|784 680 840 750 770 g|796 705 935 750 842 r|808 610 845 632 840 g|820 610 700 632 680 r|832 632 700 635 680 g|844 632 773 660 720 r|856 610 750 632 690 g|868 610 705 632 690 r|880 520 750 565 680 g|892 518 612 565 568 y|904 470 590 565 568 y|916 495 632 565 632 r|928 565 705 610 680 r|940 632 750 680 705 g|952 632 730 655 705 r|964 680 720 690 700 y|964 845 980 867 935 g|976 800 1005 867 958 r|988 840 1003 890 978 g|1000 845 980 890 935 r|1012 845 960 870 935 g|1024 725 870 750 868 G`,
    gdots:'91,1414 103,1312 115,1207 127,1122 139,1069 151,1038 163,1005 175,968 187,921 199,883 211,867 223,860 271,907 283,883 295,858 318,815 331,788 343,772 390,785 402,766 414,740 426,722 438,720 462,690 474,685 486,640 498,600 509,590 534,592 654,770 666,750 678,720 690,686 702,655 714,650 726,630 738,610 750,602 844,680 870,680 906,635 918,627',
    rdots:'235,878 248,908 260,912 355,780 367,790 378,794 450,720 521,605 546,605 558,625 570,673 594,758 606,786 618,798 630,820 642,825 762,610 774,655 786,683 810,690 822,690 940,640 965,690 978,730 990,765 1002,785 1014,805',
    blue:'70,1440 80,1270 95,1060 110,900 122,825 135,810 160,802 185,722 215,715 231,730 240,816 280,816 292,836 305,828 328,760 350,757 365,722 400,722 412,734 425,716 465,715 484,600 496,555 508,550 520,522 545,522 556,580 580,740 604,820 620,850 640,853 652,898 664,800 676,700 700,625 720,622 736,562 750,558 760,522 772,545 784,610 796,667 868,667 880,713 904,645 940,640 952,607 965,690 980,770 1000,815 1018,825',
    mag:['70,1245 80,1130 95,960 110,850 122,720 136,610 150,545 162,500 175,425 187,370 205,325 220,304 245,345 268,370 290,378 305,402 318,411 328,405 362,470 375,475 400,498 420,497 460,523 478,505 496,500 508,530 520,570 545,615 580,680 592,687 620,740 640,763 652,740 664,705 690,655 715,650 736,626 762,620 796,665 808,655 850,680 870,675 890,645 915,645 940,652 955,643 975,655 1000,705 1024,712'],
    white:'70,1390 75,1290 90,1080 105,920 115,830 122,775 135,762 150,760 162,750 175,710 187,672 193,667 205,678 215,705 229,740 237,790 243,866 262,867 270,855 280,820 290,788 302,780 316,755 330,710 340,710 350,745 362,770 375,768 400,735 412,690 424,668 436,685 460,705 472,630 484,545 496,507 508,520 520,572 532,530 544,560 556,620 568,700 580,790 592,830 604,870 616,893 628,905 640,895 652,850 664,770 676,680 690,600 700,575 712,595 724,560 736,515 748,545 770,600 784,640 796,715 802,722 816,705 832,690 850,695 870,685 890,640 905,595 915,592 930,615 950,650 965,760 980,810 990,840 1000,862 1012,876 1020,860',
    rings:[[919,811,1059,1014,24]] },
  { y:[493,559], o:[820,470,3,3], name:'MA.Conv.Div', labels:'0,3:80 0,2:125 0,1:173 0:218 -0,1:264', h:[['#900',217]],
    trend:['68,152 80,120 112,72 135,95 160,122 180,125 220,170 243,217 270,205 320,203 328,188 362,215 412,197 455,207 472,188 496,173 508,195 532,205 580,258 616,260 640,252 664,210 688,182 712,190 736,176 748,195 797,238 808,228 868,223 905,206 950,220 976,252 1002,257 1024,238','68,148 112,100 125,82 160,110 190,125 220,150 250,195 290,203 345,198 375,210 430,200 460,206 496,183 532,200 560,217 600,250 640,252 670,220 700,192 736,180 770,195 810,225 850,225 905,210 965,225 1002,248 1024,247'] },
  { y:[562,674], o:[820,470,3,3], name:'RSI', labels:'80:334 60:442 40:550', h:[['#900',388],['#080',604]],
    trend:['66,348 75,310 90,297 115,290 122,330 136,400 148,390 160,402 172,376 184,373 196,430 208,441 220,437 232,530 244,535 257,465 280,442 304,468 316,460 328,400 340,505 352,493 364,503 376,465 400,455 412,437 448,500 460,450 472,393 484,423 496,403 508,513 520,508 532,470 544,515 568,560 580,567 592,545 604,562 616,545 628,545 640,515 652,445 664,420 676,418 688,407 700,448 712,458 724,400 736,430 748,507 760,485 772,538 784,530 796,552 808,485 820,505 832,485 844,513 856,485 868,500 880,463 904,464 916,500 928,520 940,508 952,520 964,580 976,603 988,565 1000,580 1024,490'] },
  { y:[676,783], o:[820,470,3,3], name:'Ichi Moku', labels:'78:624 77:736 76:848', step:12,
    gray:'68,690 100,665 140,690 175,650 220,640 245,690 300,702 345,660 375,645 400,650 425,635 440,660 470,690 500,680 530,700 560,660 600,690 640,665 660,690 690,700 740,690',
    spanA:'68,928 90,928 120,908 160,870 172,862 184,820 208,808 220,805 232,797 256,788 280,765 304,760 340,772 362,765 376,722 400,708 412,680 520,668 532,693 572,693 600,683 620,670 650,675 700,682 748,668 780,652 800,648 850,655 880,680 905,697 935,700 960,670 1000,658 1024,655',
    spanB:'66,918 130,918 175,903 187,870 210,868 232,855 280,845 304,843 316,820 350,818 362,795 376,750 388,747 412,733 460,712 540,712 580,700 620,692 650,685 765,683 772,660 900,662 960,665 1024,667',
    blue:'66,755 75,720 95,712 110,670 150,668 220,668 232,695 256,693 300,678 325,667 340,680 410,668 460,670 484,648 520,653 556,665 580,698 640,698 660,680 700,650 736,660 750,655 796,680 830,680 870,660 905,658 940,662 960,668 980,690 1000,698 1024,692',
    red:'66,768 75,765 90,730 105,720 118,715 130,690 150,670 208,668 240,690 300,693 320,680 400,672 460,668 480,652 545,651 580,665 600,680 620,697 655,695 690,660 760,655 800,672 860,682 880,662 960,660 980,672 1024,690',
    yellow:'66,732 80,690 95,650 115,640 130,665 180,650 208,672 220,680 232,708 244,715 256,685 300,678 316,680 328,652 340,685 376,690 400,668 412,650 430,668 460,680 472,640 484,645 496,632 508,668 520,680 532,655 556,690 580,702 604,698 640,688 652,655 690,640 712,655 724,633 748,650 772,680 796,690 808,670 850,675 880,658 905,660 940,668 976,702 988,690 1000,695 1024,680' }]},

vix60: { view:[1246,72,349,826], o:[1230,40,3,3], axis:901, cross:481, right:1593, grid:[139,301,463,625,787], times:{463:'06',625:'07',787:'08'}, tone:'#3c3c3c',
  panes:[
  { y:[74,592], sel:1, labels:'78:184 77,75:433 !77,5:680 77,25:928 77:1177 76,75:1423', mark:[834,876,680], mark2:[876,898,680],
    w:4, candles:`85 1420 1590 1470 1500 r|102 1178 1500 1225 1495 g|121 580 1250 705 1200 g|139 357 875 405 730 g|157 405 775 408 730 r|175 580 775 680 730 g|193 457 680 480 680 g|211 507 700 510 680 r|229 630 1077 680 975 r|247 555 1050 730 975 g|265 605 875 632 755 g|283 480 805 655 705 r|301 382 705 432 660 g|319 405 875 408 730 r|337 555 805 630 730 g|355 580 705 582 632 g|373 457 605 555 580 g|391 530 755 580 680 r|409 160 755 283 680 g|427 208 457 258 283 g|445 233 670 258 605 r|463 208 755 305 655 r|481 655 853 655 850 r|499 777 975 828 850 g|517 828 927 851 855 r|535 755 877 778 850 g|553 382 828 433 777 g|571 307 507 382 433 g|589 333 705 358 507 r|607 258 580 358 507 g|625 382 560 385 507 r|643 457 777 580 675 r|661 530 877 555 670 g|679 532 655 580 582 y|697 530 705 553 556 y|696 556 580 558 578 g|715 433 605 480 555 g|733 382 530 480 483 y|751 405 655 480 630 r|769 560 670 630 633 y|787 730 950 877 903 r|805 777 950 877 927 g|824 655 903 680 878 G`,
    gdots:'142,1592 160,1448 178,1339 196,1240 214,1165 232,1128 250,1099 268,1068 286,1021 304,964 322,916 340,886 358,865 376,826 394,808 412,766 430,712 448,673 466,637 556,730 574,682 592,646 608,607 627,590 645,586 715,604 735,582 753,568',
    rdots:'485,650 502,685 520,730 538,746 663,610 697,615 770,572 788,613 806,657',
    blue:'99,1650 105,1580 118,1470 130,1360 145,1170 157,1060 175,990 193,900 211,855 283,855 301,818 320,806 355,806 373,768 391,767 409,715 427,643 445,637 463,615 482,613 490,555 499,515 517,583 535,607 553,608 560,680 571,762 590,732 608,675 787,675 795,620 805,575 822,592',
    mag:['77,1428 88,1340 100,1220 115,1080 130,850 150,620 163,480 175,360 193,250 211,186 230,207 250,205 265,212 283,244 301,240 320,300 338,337 355,343 373,362 391,397 409,345 427,318 445,370 463,450 482,560 499,620 517,640 535,672 553,630 571,570 590,550 608,538 627,540 650,568 661,567 679,548 697,560 715,547 733,533 750,543 770,570 787,600 805,615 824,625'],
    white:'76,1560 84,1550 95,1500 105,1450 115,1380 125,1250 140,1080 155,910 170,840 180,800 193,745 211,705 230,755 247,768 265,760 280,730 300,662 320,656 340,663 355,660 373,620 390,622 400,600 412,550 427,490 445,477 463,465 470,500 482,560 500,680 517,740 535,763 553,720 571,610 590,580 608,522 627,521 645,560 661,602 697,606 715,592 733,545 750,543 770,570 787,650 805,730 822,743' },
  { y:[595,680], o:[1230,480,3,3], name:'MA.Conv.Div', labels:'0,4:374 0,2:464 0:554', h:[['#900',553]],
    trend:['77,402 100,402 118,385 140,350 160,370 190,375 211,395 230,433 265,452 285,463 300,457 320,478 373,490 391,507 410,492 427,482 463,520 482,545 500,560 520,568 537,567 553,547 571,532 608,520 643,542 700,542 735,542 769,555 787,577 805,584 823,577','77,398 110,403 140,375 170,368 200,375 247,420 283,443 320,460 391,492 409,493 430,485 463,505 499,538 537,556 571,543 608,530 661,535 700,543 733,541 775,550 805,570 823,575'] },
  { y:[683,768], o:[1230,480,3,3], name:'RSI', labels:'80:647 60:740 40:833', h:[['#900',694]],
    trend:['77,678 88,678 110,640 139,614 157,680 180,675 193,665 211,705 229,750 247,727 265,718 283,730 301,703 319,752 340,740 373,733 391,755 409,710 429,706 445,770 463,778 483,807 499,804 517,807 535,793 553,737 571,730 589,755 607,733 643,798 661,775 697,775 715,760 733,760 751,799 769,800 787,856 805,850 823,792'] },
  { y:[771,895], o:[1230,480,3,3], name:'Ichi Moku', labels:'78:880 77:976 76:1075 75:1177', step:18,
    gray:'77,940 95,905 120,915 139,905 250,915 265,908 285,912 300,910 325,925 340,948 356,945',
    spanA:'52,1232 65,1225 90,1198 139,1178 157,1157 193,1143 229,1123 247,1120 265,1137 301,1145 337,1152 373,1132 409,1102 427,1073 463,1045 499,1018 540,1008 553,997 571,967 607,948 643,925 661,922 690,935 733,937 780,920 823,922',
    spanB:'52,1238 67,1238 99,1213 157,1210 167,1204 193,1204 229,1187 247,1171 355,1170 391,1142 409,1130 427,1097 465,1093 482,1087 540,1087 553,1080 571,1050 589,1033 625,1023 661,1023 679,1007 700,1002 733,978 751,976 787,958 823,958',
    blue:'77,1003 100,1000 121,965 150,945 180,925 211,920 229,937 283,937 301,920 390,920 409,903 475,902 499,920 517,942 540,943 553,930 571,922 607,907 640,912 661,922 700,927 720,913 787,912 800,930 823,938',
    red:'52,1030 77,1022 90,1020 121,1000 139,967 157,960 190,957 211,940 229,925 247,935 300,935 340,932 355,922 390,918 427,905 475,903 500,910 517,920 560,920 575,927 607,918 661,913 690,918 740,922 780,912 800,922 823,925',
    yellow:'77,1007 88,1008 100,990 121,930 139,903 157,930 175,925 193,908 211,930 229,957 247,935 265,920 283,927 301,903 319,932 340,922 373,912 391,927 411,886 429,887 445,915 463,925 483,942 535,940 553,903 571,898 589,908 607,895 640,927 661,912 700,915 733,905 751,918 787,948 805,945 823,928' }]},

day: { view:[1467,72,428,774], o:[1580,0,3,3], axis:754, cross:425, right:1893, grid:[208,586], times:{208:'08.10',586:'09.10'},
  panes:[
  { y:[73,492], sel:1, labels:'79:205 78:328 !77,5:390 77:451 76:571 75:691 74:814 73:935 72:1057 71:1177 70:1300 69:1420', mark:[688,742,388],
    h:[['#f00',322],['#f00',895],['#f00',1471],['#c00',592,'5 3'],['#c00',760,'5 3'],['#c00',1030,'5 3']],
    lines:[['#ff8',1,'69,404 700,222'],['#ff8',1,'69,556 754,359'],['#d00',1,'185,322 752,764'],['#d00',1,'69,545 135,325']], note:['% 13,82',152,343],
    w:4, candles:`81 465 653 478 630 g|100 455 642 590 593 r|118 545 657 565 570 r|136 375 630 438 585 g|154 368 480 387 448 r|172 322 412 382 410 g|190 365 567 405 468 r|208 355 465 365 460 g|226 325 515 358 487 r|244 437 580 475 577 r|262 520 665 548 605 r|280 520 650 535 575 g|298 417 535 525 530 g|316 555 670 560 655 r|334 690 885 690 838 r|352 780 872 798 850 g|370 735 855 765 780 r|388 720 837 725 735 g|406 600 730 613 715 g|424 583 603 588 600 r|442 533 660 595 655 r|460 655 762 675 695 r|478 660 750 692 697 r|496 690 812 715 745 r|514 710 818 787 790 r|532 675 785 678 770 g|550 588 710 595 677 g|568 560 698 567 630 g|586 375 545 390 545 g|604 347 437 390 393 y|622 323 410 378 385 g|640 330 423 343 348 r|658 350 410 352 382 r|677 385 415 388 413 G`,
    gdots:'69,910 85,860 103,814 121,781 139,742 157,700 175,652 193,625 211,596 229,581 247,574 301,580 409,693 427,677 445,660 569,680 587,648 605,607 624,565 641,535 659,510 677,502',
    rdots:'265,584 283,588 319,590 337,620 355,656 373,685 391,700 460,660 479,665 497,678 515,690 533,702',
    blue:'69,840 85,770 100,725 120,705 135,665 155,605 173,545 190,540 210,515 235,510 262,508 280,465 298,464 318,482 334,560 352,630 370,663 388,677 425,678 443,716 497,717 515,666 569,665 587,668 605,600 623,545 641,510 659,490 677,486',
    mag:['69,800 85,745 100,710 120,685 140,640 165,565 185,510 210,470 240,450 270,438 298,417 315,407 335,422 370,433 400,418 425,415 443,420 480,445 497,475 515,505 533,535 551,552 569,564 590,550 630,525 677,502'],
    white:'69,780 85,720 100,665 120,640 135,590 155,520 173,477 190,477 205,452 225,447 240,460 262,505 280,528 298,512 316,550 334,620 352,690 370,730 388,742 406,715 425,680 443,656 461,672 480,685 497,712 515,730 533,730 551,700 569,675 587,620 605,530 623,480 641,445 659,425 677,418',
    arrow:1 },
  { y:[495,604], o:[1450,480,3,3], dx:390, labels:'1:86 0,5:183 0:278 -0,5:373', h:[['#900',277]],
    trend:['459,110 475,73 508,82 528,65 562,55 568,68 580,78 600,78 620,125 638,170 655,207 690,223 710,265 727,325 745,352 762,360 780,350 797,320 815,294 833,289 870,298 888,307 905,325 925,305 942,275 960,248 978,198 995,170 1013,152 1032,139 1050,147 1068,158','459,137 475,113 490,100 510,94 528,80 562,67 600,77 618,95 655,160 690,195 710,230 727,265 745,300 762,325 780,335 797,325 815,312 833,304 850,300 888,301 905,314 925,310 942,297 960,280 978,245 995,212 1013,185 1032,165 1050,160 1068,160'] },
  { y:[606,682], o:[1450,480,3,3], dx:390, labels:'80:380 70:428 60:478 50:527 40:577', h:[['#900',428],['#ff0',529,'5 3']],
    trend:['459,402 475,385 490,440 508,432 527,408 545,413 563,400 580,444 599,422 617,478 635,512 653,523 670,500 689,496 707,545 725,600 743,580 761,572 779,548 797,508 815,503 833,530 851,544 869,548 905,582 923,525 941,485 959,475 977,425 1013,421 1031,412 1049,436 1068,443'] },
  { y:[684,844], o:[1450,480,3,3], dx:390, labels:'78:620 76:715 74:811 72:907 70:1003 68:1097', step:18,
    gray:'459,790 490,730 508,700 527,650 545,645 563,635 580,628 599,640',
    spanA:'459,880 490,848 508,832 527,815 563,814 581,820 599,800 617,768 653,735 671,700 689,693 707,678 725,675 743,667 770,667 785,675 797,690 815,697 840,697 851,710 869,745 905,778 923,788 941,780 959,762 977,750 1000,752 1013,745 1031,768 1049,772 1068,785',
    spanB:'459,946 472,945 490,933 527,916 581,916 599,905 617,880 635,875 655,873 671,845 689,807 707,790 725,780 743,760 780,760 797,745 869,745 905,731 1031,731 1068,737',
    blue:'459,795 475,760 490,730 508,712 527,695 545,692 563,670 599,667 635,672 653,688 671,707 707,707 725,745 743,775 761,803 780,803 797,775 815,765 833,740 869,745 887,783 923,783 941,770 960,755 978,707 995,698 1013,665 1031,638 1068,638',
    red:'459,810 475,800 490,770 527,765 545,720 563,693 581,685 599,684 617,668 653,668 671,687 707,690 725,707 743,747 780,747 797,778 815,782 833,770 851,765 869,755 887,748 905,755 923,757 941,778 960,773 977,763 995,730 1013,717 1031,693 1049,692 1068,662',
    yellow:'459,722 473,680 490,725 508,712 527,662 545,667 563,640 580,675 599,635 617,685 635,718 653,730 671,700 689,697 707,745 725,820 743,805 761,797 779,765 797,735 815,727 833,750 851,763 869,768 887,785 905,802 923,755 941,725 960,712 978,646 1013,641 1031,628 1049,639 1068,643' }]},

eurusd: { view:[12,534,299,416], o:[0,500,3,3], axis:739, cross:49, right:309, grid:[67,175,283,391,499,607], times:{499:'12',607:'14'}, dot:2,
  panes:[
  { y:[535,798], sel:1, labels:'1,273:166 1,272:265 1,271:364 1,27:466 1,269:565 1,268:664 !1,2678:688 1,267:763 1,266:862', mark:[672,735,688],
    w:5, hollow:1, candles:`67 498 568 522 555 g|85 485 550 507 532 r|103 505 550 530 540 r|121 503 545 530 533 g|139 505 602 525 545 r|157 523 598 540 555 r|175 465 580 475 565 g|193 420 525 443 478 g|211 435 480 440 460 g|229 393 460 397 440 g|247 348 430 370 400 g|265 345 415 383 395 r|283 310 445 384 430 r|301 410 475 425 450 r|319 322 450 331 430 g|337 307 420 345 390 r|355 322 410 330 385 g|373 246 355 256 330 g|391 220 310 254 300 g|409 250 345 252 288 r|427 183 340 217 275 g|445 180 265 209 220 g|463 200 335 207 295 r|481 177 330 181 295 g|499 132 230 192 200 r|517 165 315 192 298 r|535 212 326 238 316 g|553 202 455 237 425 r|571 335 665 423 570 r|589 520 650 558 605 r|607 500 680 604 607 r|625 598 797 600 776 r|643 757 866 769 773 g|661 681 782 688 780 g`,
    gdots:'67,560 90,553 108,551 126,551 178,550 196,540 214,529 232,513 250,495 268,479 286,463 304,458 322,450 340,441 358,430 376,413 394,394 412,380 430,364 448,346 466,337 484,322 502,310 519,299 538,295',
    rdots:'573,340 591,380 609,420 627,460 645,514 663,547',
    blue:'45,563 160,563 175,555 193,537 211,520 229,498 247,462 265,447 301,447 319,430 340,428 355,410 373,370 391,347 409,338 427,310 445,288 463,287 481,275 499,261 535,261 553,265 571,335 589,420 607,475 625,560 643,620 661,626',
    mag:['45,530 66,510 85,490 103,490 121,495 139,505 157,523 175,520 211,485 229,455 247,410 265,383 283,374 301,375 319,345 337,338 355,323 373,285 391,262 409,260 427,225 445,210 463,213 481,185 499,165 517,178 535,186 553,240 571,340 589,440 607,530 625,640 643,750 661,805'],
    white:'45,535 66,530 139,532 157,538 175,520 193,500 211,482 229,455 247,423 265,410 283,415 301,423 319,394 337,393 355,375 373,335 391,307 409,300 427,270 445,252 463,262 481,238 499,227 517,247 535,246 545,275 571,390 607,510 625,600 643,655 661,665' },
  { y:[801,872], name:'MA.Conv.Div', labels:'0,0005:921 0:978 -0,0005:1033 -0,001:1086', h:[['#900',976]],
    trend:['45,962 157,968 175,960 193,950 211,940 247,935 283,933 301,940 340,937 370,920 391,913 409,914 427,910 445,908 463,920 481,917 499,916 517,937 535,942 553,970 571,1015 589,1045 607,1062 625,1095 643,1110 661,1100','45,961 130,964 157,966 193,960 247,938 283,935 320,940 355,930 391,922 445,914 499,916 535,932 553,948 607,1025 643,1075 661,1087'] },
  { y:[876,947], name:'RSI', labels:'80:1130 60:1200 40:1275 20:1347', h:[['#900',1162],['#080',1312]],
    trend:['45,1230 67,1217 85,1217 103,1227 121,1222 139,1225 157,1245 175,1183 193,1165 211,1165 229,1145 249,1132 265,1155 283,1195 301,1215 319,1157 337,1205 373,1157 391,1153 409,1180 427,1155 445,1153 463,1213 481,1172 499,1183 517,1230 535,1210 553,1270 571,1302 589,1311 607,1312 625,1335 643,1336 661,1300'] }]}
};

const parse = s => s.split(' ').map(p => p.split(',').map(Number));
const R = Math.round;
const rect = (x, y, w, h, f, e = '') => `<rect x="${x}" y="${y}" width="${w}" height="${h}" fill="${f}" ${e}/>`;
const line = (x1, y1, x2, y2, c, e = '') => `<line x1="${x1}" y1="${y1}" x2="${x2}" y2="${y2}" stroke="${c}" ${e}/>`;
const at = (pts, x) => {
  for (let i = 1; i < pts.length; i++) if (x <= pts[i][0]) {
    const [a, b] = [pts[i - 1], pts[i]];
    return a[1] + (b[1] - a[1]) * (x - a[0]) / (b[0] - a[0]);
  }
  return pts[pts.length - 1][1];
};

function pane(c, p) {
  const o = p.o || c.o, d = p.dx || 0, tone = c.tone || '#262626', dot = c.dot || 3;
  const X = x => R(o[0] + x / o[2]), Y = y => R(o[1] + y / o[3]);
  const left = c.view[0] + 2, [top, bot] = p.y, h = bot - top, ax = X(c.axis + d), w = c.right - left;
  let s = '';
  const poly = (str, col, sw) => `<polyline points="${parse(str).map(q => X(q[0]) + '.5,' + Y(q[1]) + '.5').join(' ')}" fill="none" stroke="${col}" stroke-width="${sw}" stroke-linejoin="round"/>`;
  const dots = (str, col) => parse(str).map(q => rect(X(q[0]) - 1, Y(q[1]) - 1, dot, dot, col)).join('');
  c.grid.forEach(g => s += line(X(g + d) + .5, top, X(g + d) + .5, bot, tone, 'stroke-dasharray="4 3"'));
  const labels = p.labels.split(' ').map(l => { const [t, y] = l.split(':'); return { t: t.replace('!', ''), hot: t[0] === '!', y: Y(+y) }; });
  const cool = labels.filter(l => !l.hot || !labels.some(m => m !== l && Math.abs(m.y - l.y) < 32));
  cool.forEach((l, i) => {
    s += line(left, l.y + .5, ax, l.y + .5, tone, 'stroke-dasharray="4 3"') + line(ax - 8, l.y + .5, ax, l.y + .5, '#0ff');
    const n = cool[i + 1];
    if (n) s += line(ax - 3, R((l.y + n.y) / 2) + .5, ax, R((l.y + n.y) / 2) + .5, '#0ff');
  });
  (p.h || []).forEach(([col, y, dash]) => s += line(left, Y(y) + .5, ax, Y(y) + .5, col, dash ? `stroke-dasharray="${dash}"` : ''));
  if (p.name) s += `<text x="${left + 3}" y="${top + 12}" fill="#ff0" stroke="#ff0" stroke-width="0.4">${p.name}</text>`;
  if (p.candles) p.candles.split('|').forEach(k => {
    const [x, hi, lo, bt, bb, col] = k.split(' ');
    const px = X(+x), y1 = Y(+hi), y2 = Y(+lo), b1 = Y(+bt), b2 = Math.max(Y(+bb), b1 + 1);
    const wick = { g: '#0f0', r: '#f00', y: '#ff0', G: '#0d0' }[col], body = { g: '#00b400', r: '#b40000', y: '#ff0', G: '#00c800' }[col];
    s += rect(px, y1, 1, Math.max(1, y2 - y1), wick);
    if (p.hollow) {
      if (col === 'g') s += `<rect x="${px - 1.5}" y="${b1 + .5}" width="4" height="${Math.max(0, b2 - b1 - 1)}" fill="#000" stroke="#0f0"/>`;
      else s += rect(px - 2, b1, 5, b2 - b1, '#f00');
    } else if (col === 'G') s += rect(px - 2, b1, p.w + 1, b2 - b1, body);
    else {
      s += rect(px - p.w + 1, b1, p.w, b2 - b1, body) + rect(px - p.w + 1, b1, 1, b2 - b1, wick);
      if (p.w < 4) s += rect(px, b1, 1, b2 - b1, wick);
    }
  });
  (p.lines || []).forEach(([col, sw, pts]) => s += poly(pts, col, sw));
  if (p.note) s += `<text x="${X(p.note[1])}" y="${Y(p.note[2]) + 4}" fill="#c00">${p.note[0]}</text>`;
  if (p.gray) s += poly(p.gray, '#444', 1);
  if (p.spanA) {
    const a = parse(p.spanA), b = parse(p.spanB);
    for (let x = a[0][0] + p.step; x <= a[a.length - 1][0]; x += p.step) {
      const ya = at(a, x), yb = at(b, x), px = X(x) + .5;
      s += line(px, Y(Math.min(ya, yb)), px, Y(Math.max(ya, yb)), ya < yb ? '#0f0' : '#f00', 'stroke-dasharray="4 3"');
    }
    s += poly(p.spanA, '#0f0', 1) + poly(p.spanB, '#f00', 1);
  }
  if (p.gdots) s += dots(p.gdots, '#0f0');
  if (p.rdots) s += dots(p.rdots, '#e00');
  if (p.blue) s += poly(p.blue, '#0080ff', 2);
  if (p.red) s += poly(p.red, '#f00', 2);
  if (p.yellow) s += poly(p.yellow, '#ff0', 1);
  (p.mag || []).forEach(m => s += poly(m, '#f0f', 1));
  if (p.white) s += poly(p.white, '#fff', 2);
  (p.trend || []).forEach(t => {
    const q = parse(t);
    for (let i = 1; i < q.length; i++) s += line(X(q[i - 1][0]) + .5, Y(q[i - 1][1]) + .5, X(q[i][0]) + .5, Y(q[i][1]) + .5, q[i][1] <= q[i - 1][1] ? '#0f0' : '#f00');
  });
  if (p.mark) s += line(X(p.mark[0]), Y(p.mark[2]) + .5, X(p.mark[1]), Y(p.mark[2]) + .5, '#ff0');
  if (p.mark2) s += line(X(p.mark2[0]), Y(p.mark2[2]) + .5, X(p.mark2[1]), Y(p.mark2[2]) + .5, '#f0f');
  s += line(ax + .5, top, ax + .5, bot, '#0ff');
  [...labels.filter(l => !l.hot), ...labels.filter(l => l.hot)].forEach(l => {
    if (l.hot) s += rect(ax + 2, l.y - 5, 50, 10, '#000');
    s += `<text x="${ax + 3}" y="${l.y + 4}" fill="${l.hot ? '#ff0' : '#0ff'}">${l.t}</text>`;
  });
  (p.rings || []).forEach(r => s += `<rect x="${X(r[0])}" y="${Y(r[1])}" width="${X(r[2]) - X(r[0])}" height="${Y(r[3]) - Y(r[1])}" rx="${r[4]}" fill="none" stroke="#f90" stroke-width="2" shape-rendering="auto"/>`);
  if (p.arrow) s += '<path d="M1813 143l14 9-5 3 12 16-3 2-11-16-4 4z" fill="#f90" shape-rendering="auto"/>';
  const clip = `<svg x="${left - 1}" y="${top}" width="${w + 2}" height="${h}" viewBox="${left - 1} ${top} ${w + 2} ${h}">${s}</svg>`;
  const edge = p.sel ? `<rect x="${left - .5}" y="${top + .5}" width="${w + 1}" height="${h - 1}" fill="none" stroke="#7f7"/>` : line(c.right + .5, top, c.right + .5, bot, '#999');
  return clip + edge + line(c.view[0], bot + .5, c.right + 1, bot + .5, '#999') + line(c.view[0], bot + 1.5, c.right + 1, bot + 1.5, '#fff');
}

for (const key in C) {
  const c = C[key], X = x => R(c.o[0] + x / 3), v = c.view;
  const svg = document.querySelector(`[data-chart="${key}"]`);
  svg.setAttribute('viewBox', v.join(' '));
  svg.setAttribute('shape-rendering', 'crispEdges');
  svg.innerHTML = c.panes.map(p => pane(c, p)).join('') + line(v[0] + .5, v[1], v[0] + .5, v[1] + v[3], '#999') + line(X(c.cross) + .5, v[1], X(c.cross) + .5, v[1] + v[3] - 2, '#999');
  const ax = document.querySelector(`[data-time="${key}"]`);
  ax.setAttribute('viewBox', `${v[0]} 0 ${v[2] - 65} 20`);
  ax.innerHTML = c.grid.map(g => rect(X(g), 2, 1, 18, '#fff')).join('') + Object.entries(c.times).map(([x, t]) => `<text x="${X(+x) + 2}" y="18" fill="#0ff">${t}</text>`).join('');
}
```
